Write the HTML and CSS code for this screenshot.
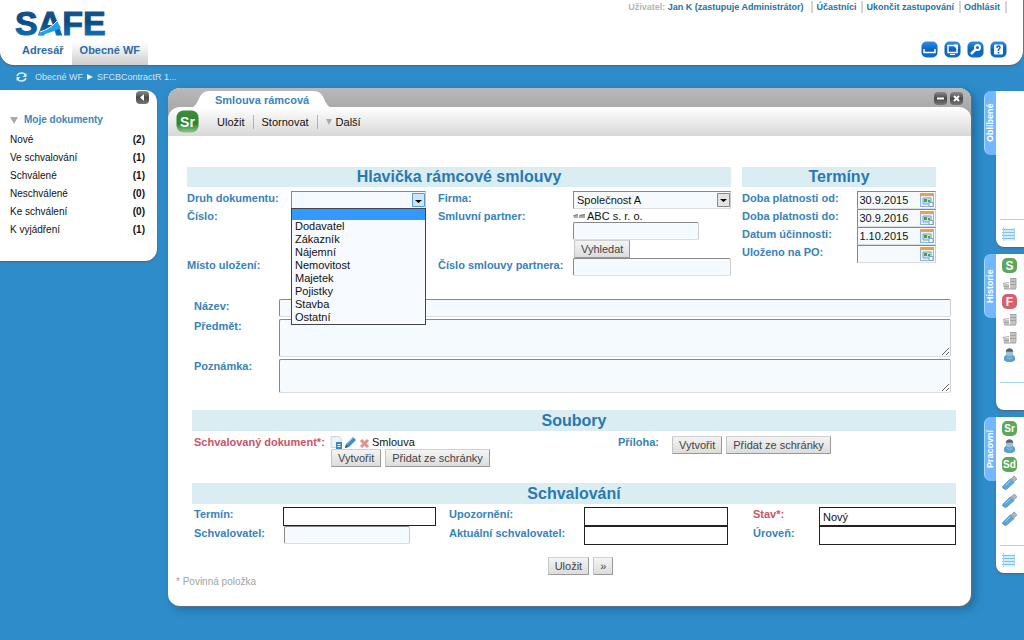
FILE: index.html
```html
<!DOCTYPE html>
<html lang="cs">
<head>
<meta charset="utf-8">
<title>SAFE – Smlouva rámcová</title>
<link rel="stylesheet" href="styles.css">
</head>
<body>
<svg class="defs" aria-hidden="true">
  <defs>
    <linearGradient id="blue" x1="0" y1="0" x2="0" y2="1"><stop offset="0" stop-color="#2f8fe6"/><stop offset=".5" stop-color="#0d62bd"/><stop offset="1" stop-color="#0b6fd0"/></linearGradient>
    <linearGradient id="grey" x1="0" y1="0" x2="0" y2="1"><stop offset="0" stop-color="#8a8a8a"/><stop offset=".5" stop-color="#4a4a4a"/><stop offset="1" stop-color="#777"/></linearGradient>
    <linearGradient id="green" x1="0" y1="0" x2="0" y2="1"><stop offset="0" stop-color="#3a8f3a"/><stop offset=".6" stop-color="#2f8430"/><stop offset="1" stop-color="#8cc98a"/></linearGradient>
    <linearGradient id="letters" x1="0" y1="0" x2="0" y2="1"><stop offset="0" stop-color="#1d5c92"/><stop offset=".45" stop-color="#0c4a80"/><stop offset="1" stop-color="#0f7fd0"/></linearGradient>
    <symbol id="calendar" viewBox="0 0 14 14"><rect x=".5" y=".5" width="13" height="13" fill="#e4f1fb" stroke="#8fb6d8"/><path d="M0 0h14v3H0z" fill="#f0a040"/><path d="M3 5h8v6H3z" fill="#c7dff0" stroke="#7ba5c9"/><path d="M4 6h3v3H4zM8 7h2v2H8z" fill="#5a9e2e"/><path d="M9 9.500h4v4H9z" fill="#fff" stroke="#7ba5c9"/></symbol>
    <symbol id="coins" viewBox="0 0 15 13"><path d="M1 7h6v5H2zM8 1h6v11H8z" fill="#c3c3c3"/><path d="M8 1.500h6M8 4.500h6M8 7.500h6M2 9.500h5M2 12h12" stroke="#a2a2a2"/><path d="M1 6.500l6-1M14 1v10" stroke="#a9a9a9"/></symbol>
    <symbol id="person" viewBox="0 0 14 16"><path d="M1 12c0-4 2-5 6-5s6 1 6 5c0 4-12 4-12 0z" fill="#5c9fcd"/><circle cx="7" cy="5" r="4" fill="#9dbdd8"/><path d="M3 4c0-5 8-5 8 0z" fill="#59656e"/><path d="M4 10q3 3 6 0" stroke="#9ccbea" fill="none"/></symbol>
    <symbol id="stick" viewBox="0 0 16 16"><path d="M1 12 9 4l4 4-8 7q-2 1-4-1-1-1 0-2z" fill="#5aa7da" stroke="#5aa0d0"/><path d="m10 4 3-3 3 3-3 3z" fill="#b7b7b7" stroke="#999"/><path d="m4 11 5-5" stroke="#a5d3f1"/></symbol>
    <symbol id="notes" viewBox="0 0 13 14"><path d="M1 1.500h12v12H1z" fill="#d4ecf9"/><path d="M0 2.500h13M0 5.500h13M0 8.500h13M0 11.500h13" stroke="#7fc3e8"/><path d="M1.500 0v14M12.500 1v12" stroke="#a4d5ee"/></symbol>
  </defs>
</svg>

<header class="header">
  <div class="header-left">
    <svg class="logo" viewBox="0 0 100 35" role="img" aria-label="SAFE">
      <text x="0" y="26" fill="url(#letters)" stroke="url(#letters)">SAFE</text>
      <path d="M24 24q10-3 18-12l4 7q-8 4-20 7h-3z" fill="#25a0ee"/><path d="M25 23q10-3 17-11" stroke="#fff" fill="none"/>
    </svg>
    <nav class="nav"><a href="#">Adresář</a><a href="#" class="active">Obecné WF</a></nav>
  </div>
  <div class="header-right">
    <div class="user-links"><span class="user"><span class="muted">Uživatel:</span> Jan K (zastupuje Administrátor)</span><a href="#">Účastníci</a><a href="#">Ukončit zastupování</a><a href="#">Odhlásit</a></div>
    <div class="tools">
      <button aria-label="Schránka"><svg viewBox="0 0 17 17"><rect x=".5" y=".5" width="16" height="16" rx="5" fill="url(#blue)"/><path d="M3 8v3.500h11V8" fill="none" stroke="#fff" stroke-width="1.500"/></svg></button>
      <button aria-label="Obrazovka"><svg viewBox="0 0 17 17"><rect x=".5" y=".5" width="16" height="16" rx="5" fill="url(#blue)"/><path d="M4 4.500h9v7H4z" fill="none" stroke="#fff" stroke-width="1.500"/><path d="M6 13.500h5M9.500 4h4v4z" stroke="#fff" fill="#fff"/></svg></button>
      <button aria-label="Heslo"><svg viewBox="0 0 17 17"><rect x=".5" y=".5" width="16" height="16" rx="5" fill="url(#blue)"/><circle cx="10.500" cy="6.500" r="2.500" fill="none" stroke="#fff" stroke-width="2"/><path d="m9 8-5 5" stroke="#fff" stroke-width="2.500"/></svg></button>
      <button aria-label="Nápověda"><svg viewBox="0 0 17 17"><rect x=".5" y=".5" width="16" height="16" rx="5" fill="url(#blue)"/><rect x="4" y="3.500" width="9" height="10" rx="1" fill="#fff"/><path d="M7 7q0-2 1.500-2T10 6.500Q10 7.500 8.500 8.500V10M8.500 11v1.500" fill="none" stroke="#0d62bd" stroke-width="1.500"/></svg></button>
    </div>
  </div>
</header>

<nav class="crumbs">
  <svg class="refresh" viewBox="0 0 11 10"><path d="M1 4q1-3 4.500-3T9 3M10 6q-1 3-4.500 3T2 7" fill="none" stroke="#d8ecf9" stroke-width="1.500"/><path d="M10.500 1v4h-4zM.5 9V5h4z" fill="#d8ecf9"/></svg>
  <a href="#">Obecné WF</a><svg class="arrow" viewBox="0 0 6 6"><path d="M0 0l6 3-6 3z" fill="#e6f3fb"/></svg><a href="#">SFCBContractR 1...</a>
</nav>

<main class="main">
  <aside class="sidebar">
    <button class="collapse" aria-label="Sbalit"><svg viewBox="0 0 13 13"><rect width="13" height="13" rx="4" fill="url(#grey)"/><path d="M8 3v7L4 6.500z" fill="#fff"/></svg></button>
    <h2><svg viewBox="0 0 8 7"><path d="M0 0h8L4 7z" fill="#a9a9a9"/></svg>Moje dokumenty</h2>
    <ul>
      <li><a href="#">Nové</a><b>(2)</b></li>
      <li><a href="#">Ve schvalování</a><b>(1)</b></li>
      <li><a href="#">Schválené</a><b>(1)</b></li>
      <li><a href="#">Neschválené</a><b>(0)</b></li>
      <li><a href="#">Ke schválení</a><b>(0)</b></li>
      <li><a href="#">K vyjádření</a><b>(1)</b></li>
    </ul>
  </aside>

  <section class="window">
    <div class="titlebar">
      <div class="tab"><svg class="slope" viewBox="0 0 24 17"><path d="M2 17C12 16 9 0 21 0h3v17z" fill="#fff"/></svg><h1>Smlouva rámcová</h1><svg class="slope" viewBox="0 0 24 17"><path d="M22 17C12 16 15 0 3 0H0v17z" fill="#fff"/></svg></div>
      <div class="controls">
        <button aria-label="Minimalizovat"><svg viewBox="0 0 13 13"><rect width="13" height="13" rx="4" fill="url(#grey)"/><path d="M3 6.500h7" stroke="#fff" stroke-width="2"/></svg></button>
        <button aria-label="Zavřít"><svg viewBox="0 0 13 13"><rect width="13" height="13" rx="4" fill="url(#grey)"/><path d="m4 4 5 5M9 4 4 9" stroke="#fff" stroke-width="2"/></svg></button>
      </div>
    </div>
    <div class="toolbar">
      <svg class="doc-icon" viewBox="0 0 23 23"><rect x=".5" y=".5" width="22" height="22" rx="7" fill="url(#green)"/><text x="11.500" y="17" text-anchor="middle">Sr</text></svg>
      <button>Uložit</button><button>Stornovat</button><button class="more"><svg viewBox="0 0 6 6"><path d="M0 0h6L3 6z" fill="#aaa"/></svg>Další</button>
    </div>

    <form class="form">
      <div class="top">
        <fieldset class="head">
          <h2 class="bar">Hlavička rámcové smlouvy</h2>
          <div class="head-grid">
            <label for="druh">Druh dokumentu:</label>
            <div class="combo">
              <select id="druh" class="hot"><option></option></select>
              <ul class="options" role="listbox" aria-label="Druh dokumentu">
                <li role="option" aria-selected="true" class="selected"></li>
                <li role="option">Dodavatel</li><li role="option">Zákazník</li><li role="option">Nájemní</li><li role="option">Nemovitost</li><li role="option">Majetek</li><li role="option">Pojistky</li><li role="option">Stavba</li><li role="option">Ostatní</li>
              </ul>
            </div>
            <label for="firma">Firma:</label>
            <select id="firma"><option>Společnost A</option></select>

            <span class="label">Číslo:</span><span></span>
            <label for="partner">Smluvní partner:</label>
            <div class="partner">
              <span class="partner-name"><svg viewBox="0 0 12 6"><path d="M0 2h5v3H1zM6 2l6-1v4H6z" fill="#aaa"/><path d="M1 2.500l4-1M7 2.500l5-1" stroke="#777"/></svg>ABC s. r. o.</span>
              <input id="partner" type="text">
              <button type="button" class="btn">Vyhledat</button>
            </div>

            <label for="misto">Místo uložení:</label><input id="misto" type="text">
            <label for="cislo-partnera">Číslo smlouvy partnera:</label><input id="cislo-partnera" type="text">
          </div>
        </fieldset>
        <fieldset class="dates">
          <h2 class="bar">Termíny</h2>
          <div class="dates-grid">
            <label for="od">Doba platnosti od:</label><div class="date"><input id="od" type="text" value="30.9.2015"><button type="button" aria-label="Kalendář"><svg><use href="#calendar"/></svg></button></div>
            <label for="do">Doba platnosti do:</label><div class="date"><input id="do" type="text" value="30.9.2016"><button type="button" aria-label="Kalendář"><svg><use href="#calendar"/></svg></button></div>
            <label for="ucinnost">Datum účinnosti:</label><div class="date"><input id="ucinnost" type="text" value="1.10.2015"><button type="button" aria-label="Kalendář"><svg><use href="#calendar"/></svg></button></div>
            <label for="po">Uloženo na PO:</label><div class="date"><input id="po" type="text"><button type="button" aria-label="Kalendář"><svg><use href="#calendar"/></svg></button></div>
          </div>
        </fieldset>
      </div>

      <div class="texts">
        <label for="nazev">Název:</label><input id="nazev" type="text">
        <label for="predmet">Předmět:</label><textarea id="predmet"></textarea>
        <label for="poznamka">Poznámka:</label><textarea id="poznamka" class="low"></textarea>
      </div>

      <div class="section">
        <h2 class="bar">Soubory</h2>
        <div class="files">
          <span class="label required">Schvalovaný dokument*:</span>
          <div class="file">
            <div class="file-name">
              <svg viewBox="0 0 13 13"><path d="M1 .5h8l2 2v9H1z" fill="#eef2f6" stroke="#ccd3da"/><path d="M6 6h6v7H6z" fill="#3a86c4"/><path d="M7.500 8.500h3M7.500 10.500h3" stroke="#fff"/></svg>
              <svg viewBox="0 0 13 13"><path d="m1 12 1-4 7-7 3 3-7 7z" fill="#3f8ccb"/><path d="m1 12 1-3 2 2z" fill="#444"/><path d="m3 8 6-6" stroke="#8cc1ea"/></svg>
              <svg viewBox="0 0 13 13"><path d="m3 4 7 7M10 4l-7 7" stroke="#e58f8f" stroke-width="3"/></svg>
              <a href="#">Smlouva</a>
            </div>
            <div class="btns"><button type="button" class="btn">Vytvořit</button><button type="button" class="btn">Přidat ze schránky</button></div>
          </div>
          <span class="label">Příloha:</span>
          <div class="btns"><button type="button" class="btn">Vytvořit</button><button type="button" class="btn">Přidat ze schránky</button></div>
        </div>
      </div>

      <div class="section">
        <h2 class="bar">Schvalování</h2>
        <div class="approval">
          <label for="termin">Termín:</label><input id="termin" class="flat" type="text">
          <label for="upozorneni">Upozornění:</label><input id="upozorneni" class="flat" type="text">
          <label for="stav" class="required">Stav*:</label><input id="stav" class="flat" type="text" value="Nový">
          <label for="schvalovatel">Schvalovatel:</label><input id="schvalovatel" class="short" type="text">
          <label for="aktualni">Aktuální schvalovatel:</label><input id="aktualni" class="flat" type="text">
          <label for="uroven">Úroveň:</label><input id="uroven" class="flat" type="text">
        </div>
      </div>
      <div class="submit"><button type="submit" class="btn">Uložit</button><button type="button" class="btn">»</button></div>
      <p class="note">* Povinná položka</p>
    </form>
  </section>

  <aside class="dock">
    <section class="dock-item"><h3>Oblíbené</h3><div class="dock-panel"><footer><svg class="notes"><use href="#notes"/></svg></footer></div></section>
    <section class="dock-item"><h3>Historie</h3><div class="dock-panel">
      <svg class="badge" viewBox="0 0 15 15"><rect width="15" height="15" rx="5" fill="#5fa65d"/><text x="7.500" y="12" text-anchor="middle">S</text></svg>
      <svg class="ico"><use href="#coins"/></svg>
      <svg class="badge" viewBox="0 0 15 15"><rect width="15" height="15" rx="5" fill="#d4616d"/><text x="7.500" y="12" text-anchor="middle">F</text></svg>
      <svg class="ico"><use href="#coins"/></svg>
      <svg class="ico"><use href="#coins"/></svg>
      <svg class="ico"><use href="#person"/></svg>
      <footer></footer></div></section>
    <section class="dock-item"><h3>Pracovní</h3><div class="dock-panel">
      <svg class="badge two" viewBox="0 0 15 15"><rect width="15" height="15" rx="5" fill="#5fa65d"/><text x="7.500" y="11" text-anchor="middle">Sr</text></svg>
      <svg class="ico"><use href="#person"/></svg>
      <svg class="badge two" viewBox="0 0 15 15"><rect width="15" height="15" rx="5" fill="#5fa65d"/><text x="7.500" y="11" text-anchor="middle">Sd</text></svg>
      <svg class="ico"><use href="#stick"/></svg>
      <svg class="ico"><use href="#stick"/></svg>
      <svg class="ico"><use href="#stick"/></svg>
      <footer><svg class="notes"><use href="#notes"/></svg></footer></div></section>
  </aside>
</main>
</body>
</html>
```

FILE: styles.css
```css
* { box-sizing: border-box; }
body { margin: 0; min-height: 100vh; background: #2d8cc9; font: 11px/14px "Liberation Sans", Arial, sans-serif; color: #111; }
h1, h2, h3, p, ul, fieldset { margin: 0; padding: 0; border: 0; min-width: 0; }
ul { list-style: none; }
a { color: inherit; text-decoration: none; }
button, input, select, textarea { font: inherit; color: inherit; margin: 0; }
button { border: 0; padding: 0; background: none; }
svg { display: block; flex: none; }
.defs { position: absolute; width: 0; height: 0; }

/* Header */
.header { display: flex; justify-content: space-between; height: 65px; margin-right: 1px; background: #fff; border-radius: 0 0 14px 14px; box-shadow: 0 1px 2px #55616b; }
.header-left { display: flex; flex-direction: column; padding: 9px 0 0 15px; }
.logo { width: 100px; height: 35px; margin-bottom: -2px; }
.logo text { font-size: 34px; font-weight: bold; }
.nav { display: flex; font-weight: bold; color: #2a6da6; line-height: 16px; }
.nav a { padding: 0 8px 7px 7px; }
.nav .active { padding: 0 8px 7px; background: linear-gradient(#fff, #cfcfcf); }
.header-right { display: flex; flex-direction: column; justify-content: space-between; align-items: flex-end; padding: 1px 16px 7px 0; }
.user-links { display: flex; font-size: 9px; line-height: 12px; font-weight: bold; color: #2a6f9f; }
.user-links > * { padding: 0 5px 0 3px; border-right: 2px solid #d4d4d4; }
.user-links .user { padding-right: 8px; }
.muted { color: #b5b5b5; }
.tools { display: flex; gap: 6px; }
.tools svg { width: 17px; height: 17px; }

/* Breadcrumbs */
.crumbs { display: flex; align-items: center; height: 23px; padding-left: 16px; font-size: 9px; color: #cfe6f5; }
.refresh { width: 11px; height: 10px; margin-right: 8px; }
.arrow { width: 6px; height: 6px; margin: 0 4px; }

.main { display: flex; align-items: flex-start; }

/* Left menu */
.sidebar { width: 157px; flex: none; display: flex; flex-direction: column; margin: 2px 11px 0 0; padding: 0 12px 22px 10px; background: #fff; border-radius: 0 12px 12px 0; box-shadow: 0 1px 2px #55616b; font-size: 10px; }
.collapse { align-self: flex-end; margin-right: -4px; padding-top: 1px; }
.collapse svg { width: 13px; height: 13px; }
.sidebar h2 { display: flex; align-items: center; gap: 6px; margin: 9px 0 4px; font-size: 10px; line-height: 14px; color: #3d87b9; }
.sidebar h2 svg { width: 8px; height: 7px; }
.sidebar li { display: flex; justify-content: space-between; line-height: 18px; }

/* Window */
.window { flex: 1; min-width: 0; border-radius: 12px; background: #fff; box-shadow: 1px 1px 2px #66717a, 4px 3px 8px #1f6a9f; }
.titlebar { display: flex; align-items: flex-end; justify-content: space-between; height: 32px; margin-bottom: -13px; padding: 0 8px 12px 20px; border-radius: 12px 12px 0 0; background: linear-gradient(#b9b9b9, #a0a0a0); }
.tab { display: flex; height: 17px; }
.tab h1 { padding: 0 2px 0 3px; background: #fff; font-size: 11px; line-height: 18px; color: #3b85bb; }
.slope { width: 24px; height: 17px; }
.controls { display: flex; gap: 3px; align-self: center; }
.controls svg { width: 13px; height: 13px; }
.toolbar { position: relative; display: flex; align-items: center; height: 29px; padding: 0 8px; background: linear-gradient(#fff, #d8d8d8); border-radius: 12px 12px 0 0; }
.doc-icon { width: 23px; height: 23px; margin-right: 10px; }
.doc-icon text { font-size: 14px; font-weight: bold; fill: #fff; }
.toolbar button { display: flex; align-items: center; gap: 4px; padding: 0 8px; line-height: 14px; border-right: 1px solid #8ebbd8; }
.toolbar button.more { border: 0; }
.more svg { width: 6px; height: 6px; }

.form { padding: 31px 15px 18px 19px; }
.bar { margin-bottom: 4px; background: #daedf3; color: #2a78b0; font-size: 16px; line-height: 21px; text-align: center; }
.top .bar { line-height: 20px; }
label, .label { font-weight: bold; color: #3783b8; line-height: 15px; }
.required { color: #cb5468; }

input, select, textarea { display: block; width: 100%; min-width: 0; height: 18px; padding: 0 3px; background: #f5faff; border: 1px solid; border-color: #888 #ccc #ddd #888; border-radius: 2px; outline: 0; }
select { appearance: none; border-radius: 0; background: #f5faff url("data:image/svg+xml,%3Csvg xmlns='http://www.w3.org/2000/svg' width='13' height='14'%3E%3Cpath d='M.5.5h12v13H.5z' fill='%23e4e4e4' stroke='%23888'/%3E%3Cpath d='M3 6h7L6.500 9z'/%3E%3C/svg%3E") no-repeat right 0 top 1px; }
select.hot { background-image: url("data:image/svg+xml,%3Csvg xmlns='http://www.w3.org/2000/svg' width='13' height='14'%3E%3Cpath d='M.5.5h12v13H.5z' fill='%23c9e6fa' stroke='%235a9bc9'/%3E%3Cpath d='M3 7h7L6.500 10z'/%3E%3C/svg%3E"); }
.btn { height: 18px; padding: 0 6px; color: #444; line-height: 16px; background: linear-gradient(#f4f4f4, #dcdcdc); border: 1px solid; border-color: #d0d0d0 #999 #999 #c4c4c4; border-radius: 1px; white-space: nowrap; }

.top { display: grid; grid-template-columns: 544fr 194fr; gap: 11px; padding-right: 20px; }
.head-grid { display: grid; grid-template-columns: 104fr 135fr 147fr 158fr; }
.head-grid > :nth-child(4n+3) { padding-left: 12px; }
.combo { position: relative; }
.options { position: absolute; z-index: 2; top: 17px; left: 0; width: 100%; background: #f7fbff; border: 1px solid #444; }
.options li { height: 13px; padding-left: 3px; line-height: 13px; }
.options .selected { height: 11px; background: #3399ff; }
.partner-name { display: flex; align-items: center; gap: 2px; height: 13px; white-space: nowrap; }
.partner-name svg { width: 12px; height: 6px; }
.partner input { width: 126px; }
.partner .btn { margin-left: 1px; }
.dates-grid { display: grid; grid-template-columns: 116fr 79fr; grid-auto-rows: 18px; }
.date { display: flex; align-items: center; height: 18px; background: #f5faff; border: 1px solid; border-color: #888 #ccc #ddd #888; padding-right: 1px; }
.date input { flex: 1; height: 16px; border: 0; padding: 0 1px; background: none; }
.date svg { width: 14px; height: 14px; }

.texts { display: grid; grid-template-columns: 85px 1fr; row-gap: 2px; margin: 23px 5px 17px 7px; }
.texts textarea { height: 38px; resize: vertical; }
.texts .low { height: 34px; }

.section { padding-left: 5px; }
.files { display: grid; grid-template-columns: 136fr 288fr 53fr 285fr; padding-left: 2px; }
.file-name { display: flex; align-items: center; gap: 1px; height: 14px; }
.file-name svg { width: 13px; height: 13px; }
.btns { display: flex; gap: 4px; padding-left: 1px; }
.files > .btns { padding-top: 1px; }
.section + .section { padding-top: 16px; }
.section + .section .bar { margin-bottom: 3px; }
.approval { display: grid; grid-template-columns: 89fr 153fr 13fr 135fr 144fr 25fr 66fr 137fr; padding-left: 2px; }
.approval > :nth-child(6n+1) { grid-column: 1; }
.approval > :nth-child(6n+2) { grid-column: 2; }
.approval > :nth-child(6n+3) { grid-column: 4; }
.approval > :nth-child(6n+4) { grid-column: 5; }
.approval > :nth-child(6n+5) { grid-column: 7; }
.approval > :nth-child(6n+6) { grid-column: 8; }
.flat { height: 19px; background: #fff; border-color: #222; border-radius: 0; }
.short { width: 126px; margin-left: 1px; }
.submit { display: flex; justify-content: center; gap: 4px; margin-top: 12px; padding-left: 18px; }
.note { margin-left: -11px; font-size: 10px; line-height: 13px; color: #a3a3a3; }

/* Right dock */
.dock { flex: none; width: 40px; margin: 3px 0 0 13px; display: grid; gap: 7px; }
.dock-item { display: flex; align-items: flex-start; }
.dock h3 { width: 12px; height: 64px; flex: none; writing-mode: vertical-rl; transform: rotate(180deg); background: #73b7ff; border-right: 1px solid #a6dcff; border-radius: 0 7px 7px 0; color: #fff; font-size: 9px; line-height: 11px; text-align: center; }
.dock-panel { flex: 1; min-height: 156px; display: flex; flex-direction: column; gap: 3px; padding: 4px 0 0 6px; background: #fff; border-radius: 0 0 0 8px; box-shadow: 0 1px 2px #55616b; }
.dock-panel footer { height: 28px; margin: auto 0 0 -2px; padding: 7px 0 0 2px; border-top: 1px solid #a8d8f0; }
.badge, .ico { width: 15px; height: 15px; }
.badge text { font-size: 12px; font-weight: bold; fill: #fff; }
.badge.two text { font-size: 10px; }
.notes { width: 13px; height: 14px; }
```
